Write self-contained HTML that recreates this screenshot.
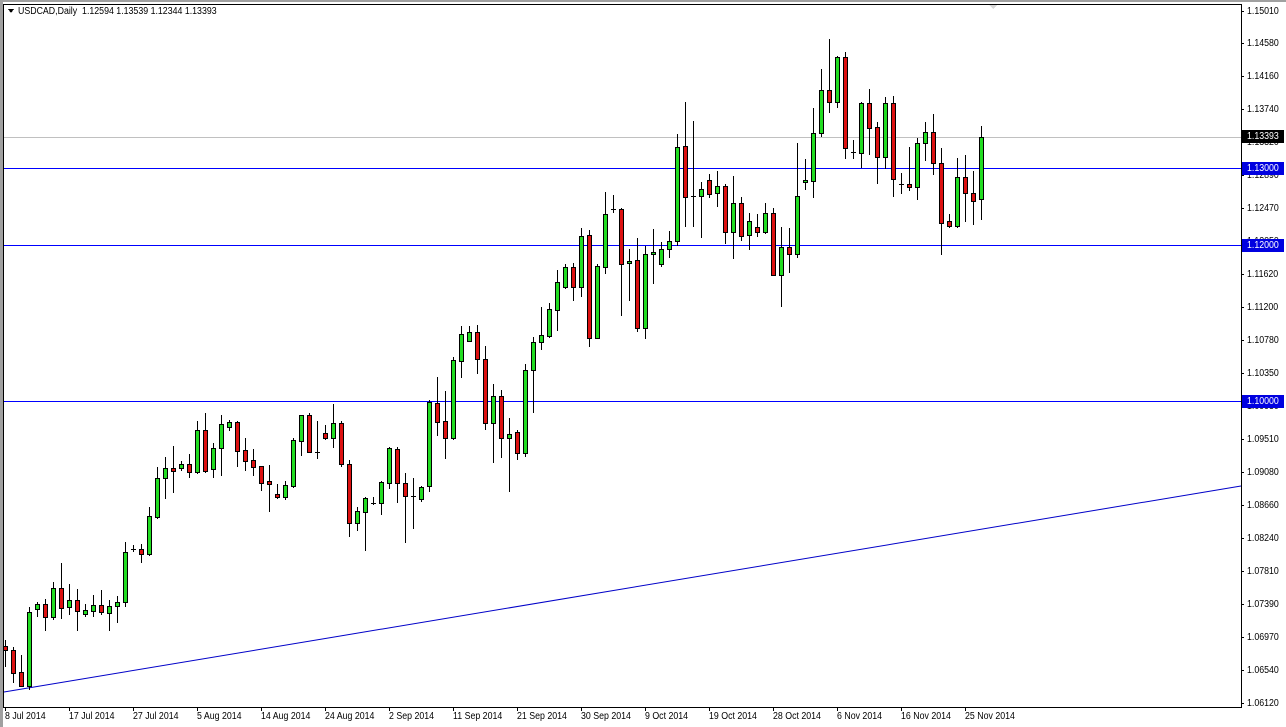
<!DOCTYPE html>
<html><head><meta charset="utf-8"><style>
html,body{margin:0;padding:0;background:#fff;width:1286px;height:727px;overflow:hidden;position:relative;font-family:"Liberation Sans",sans-serif;}
.t{position:absolute;font-size:10px;color:#000;line-height:13px;white-space:nowrap;transform:scaleX(0.88);transform-origin:0 0}
.p{left:1247px}
.hl{position:absolute;left:1242px;width:42px;height:13px;}
.hlt{position:absolute;left:1247px;font-size:10px;line-height:13px;color:#fff;white-space:nowrap;transform:scaleX(0.88);transform-origin:0 0}
</style></head><body>
<svg width="1286" height="727" style="position:absolute;left:0;top:0" shape-rendering="crispEdges">
<rect x="0" y="0" width="1286" height="2" fill="#a0a0a0"/>
<rect x="0" y="0" width="3" height="727" fill="#a0a0a0"/>
<line x1="3" y1="4.5" x2="1241" y2="4.5" stroke="#000"/>
<line x1="3.5" y1="4" x2="3.5" y2="707" stroke="#000"/>
<line x1="1241.5" y1="4" x2="1241.5" y2="707" stroke="#000"/>
<line x1="3" y1="707.5" x2="1242" y2="707.5" stroke="#000"/>
<rect x="4" y="137" width="1237" height="1" fill="#c0c0c0"/>
<rect x="4" y="168" width="1237" height="1" fill="#0000ff"/>
<rect x="4" y="245" width="1237" height="1" fill="#0000ff"/>
<rect x="4" y="401" width="1237" height="1" fill="#0000ff"/>
<line x1="4" y1="692" x2="1241" y2="486" stroke="#0000c8" shape-rendering="auto"/>
<g stroke="#000" stroke-width="1">
<path d="M1241 11.5h3M1241 43.5h3M1241 76.5h3M1241 109.5h3M1241 142.5h3M1241 175.5h3M1241 208.5h3M1241 241.5h3M1241 274.5h3M1241 307.5h3M1241 340.5h3M1241 373.5h3M1241 406.5h3M1241 439.5h3M1241 472.5h3M1241 505.5h3M1241 538.5h3M1241 571.5h3M1241 604.5h3M1241 637.5h3M1241 670.5h3M1241 703.5h3"/>
<path d="M5.5 707v4M69.5 707v4M133.5 707v4M197.5 707v4M261.5 707v4M325.5 707v4M389.5 707v4M453.5 707v4M517.5 707v4M581.5 707v4M645.5 707v4M709.5 707v4M773.5 707v4M837.5 707v4M901.5 707v4M965.5 707v4"/>
<path d="M5.5 640V667M13.5 647V683M21.5 655V686M29.5 607V690M37.5 602V617M45.5 599V631M53.5 582V620M61.5 563V619M69.5 584V615M77.5 589V631M85.5 604V617M93.5 595V617M101.5 590V615M109.5 600V631M117.5 596V623M125.5 542V607M133.5 545V552M141.5 544V563M149.5 507V556M157.5 467V519M165.5 457V499M173.5 446V493M181.5 461V471M189.5 454V478M197.5 421V474M205.5 413V473M213.5 443V478M221.5 415V476M229.5 420V431M237.5 421V467M245.5 438V471M253.5 449V476M261.5 466V491M269.5 465V512M277.5 484V499M285.5 481V500M293.5 438V488M301.5 415V456M309.5 413V453M317.5 421V459M325.5 425V440M333.5 404V448M341.5 421V467M349.5 460V537M357.5 507V531M365.5 497V551M373.5 497V505M381.5 481V515M389.5 447V489M397.5 447V503M405.5 473V543M413.5 478V529M421.5 486V502M429.5 400V492M437.5 377V436M445.5 391V459M453.5 357V440M461.5 326V378M469.5 326V342M477.5 325V374M485.5 346V430M493.5 384V463M501.5 390V458M509.5 418V492M517.5 430V460M525.5 364V457M533.5 337V413M541.5 307V350M549.5 303V338M557.5 270V331M565.5 264V289M573.5 263V301M581.5 228V297M589.5 230V347M597.5 264V339M605.5 192V274M613.5 195V213M621.5 208V316M629.5 249V301M637.5 238V332M645.5 246V339M653.5 229V284M661.5 242V267M669.5 231V258M677.5 134V246M685.5 102V227M693.5 121V227M701.5 182V238M709.5 174V198M717.5 171V207M725.5 184V244M733.5 176V259M741.5 197V241M749.5 213V250M757.5 214V237M765.5 203V234M773.5 208V276M781.5 227V307M789.5 228V273M797.5 143V258M805.5 159V190M813.5 108V198M821.5 69V137M829.5 39V113M837.5 56V108M845.5 52V159M853.5 140V159M861.5 102V168M869.5 89V155M877.5 122V184M885.5 97V169M893.5 96V197M901.5 173V194M909.5 147V191M917.5 138V200M925.5 122V161M933.5 114V175M941.5 148V255M949.5 214V228M957.5 158V228M965.5 155V222M973.5 171V225M981.5 126V220"/>
<path d="M131 549.5h5M315 452.5h5M371 503.5h5M411 496.5h5M611 209.5h5M691 196.5h5M851 152.5h5M899 184.5h5"/>
</g>
<g fill="#22dd22" stroke="#000" stroke-width="1">
<rect x="27.5" y="612.5" width="4" height="74"/><rect x="35.5" y="604.5" width="4" height="5"/><rect x="51.5" y="588.5" width="4" height="29"/><rect x="67.5" y="600.5" width="4" height="7"/><rect x="83.5" y="610.5" width="4" height="4"/><rect x="91.5" y="605.5" width="4" height="6"/><rect x="107.5" y="606.5" width="4" height="7"/><rect x="115.5" y="602.5" width="4" height="4"/><rect x="123.5" y="552.5" width="4" height="50"/><rect x="147.5" y="516.5" width="4" height="38"/><rect x="155.5" y="478.5" width="4" height="39"/><rect x="163.5" y="468.5" width="4" height="10"/><rect x="179.5" y="464.5" width="4" height="4"/><rect x="195.5" y="430.5" width="4" height="42"/><rect x="211.5" y="448.5" width="4" height="21"/><rect x="219.5" y="424.5" width="4" height="24"/><rect x="227.5" y="422.5" width="4" height="5"/><rect x="283.5" y="485.5" width="4" height="12"/><rect x="291.5" y="440.5" width="4" height="46"/><rect x="299.5" y="415.5" width="4" height="26"/><rect x="331.5" y="423.5" width="4" height="15"/><rect x="355.5" y="511.5" width="4" height="12"/><rect x="363.5" y="498.5" width="4" height="14"/><rect x="379.5" y="482.5" width="4" height="21"/><rect x="387.5" y="448.5" width="4" height="35"/><rect x="419.5" y="487.5" width="4" height="12"/><rect x="427.5" y="402.5" width="4" height="84"/><rect x="451.5" y="360.5" width="4" height="78"/><rect x="459.5" y="334.5" width="4" height="27"/><rect x="467.5" y="332.5" width="4" height="9"/><rect x="491.5" y="396.5" width="4" height="27"/><rect x="507.5" y="434.5" width="4" height="4"/><rect x="523.5" y="370.5" width="4" height="83"/><rect x="531.5" y="342.5" width="4" height="28"/><rect x="539.5" y="335.5" width="4" height="7"/><rect x="547.5" y="309.5" width="4" height="27"/><rect x="555.5" y="282.5" width="4" height="28"/><rect x="563.5" y="267.5" width="4" height="20"/><rect x="579.5" y="236.5" width="4" height="51"/><rect x="595.5" y="266.5" width="4" height="72"/><rect x="603.5" y="214.5" width="4" height="53"/><rect x="627.5" y="261.5" width="4" height="2"/><rect x="643.5" y="254.5" width="4" height="74"/><rect x="651.5" y="252.5" width="4" height="2"/><rect x="659.5" y="249.5" width="4" height="15"/><rect x="667.5" y="241.5" width="4" height="8"/><rect x="675.5" y="147.5" width="4" height="94"/><rect x="699.5" y="189.5" width="4" height="7"/><rect x="715.5" y="186.5" width="4" height="7"/><rect x="731.5" y="203.5" width="4" height="29"/><rect x="747.5" y="221.5" width="4" height="14"/><rect x="763.5" y="213.5" width="4" height="19"/><rect x="779.5" y="247.5" width="4" height="28"/><rect x="795.5" y="196.5" width="4" height="58"/><rect x="803.5" y="180.5" width="4" height="2"/><rect x="811.5" y="133.5" width="4" height="48"/><rect x="819.5" y="90.5" width="4" height="43"/><rect x="835.5" y="57.5" width="4" height="45"/><rect x="859.5" y="103.5" width="4" height="50"/><rect x="883.5" y="103.5" width="4" height="54"/><rect x="915.5" y="143.5" width="4" height="44"/><rect x="923.5" y="132.5" width="4" height="11"/><rect x="955.5" y="177.5" width="4" height="49"/><rect x="979.5" y="137.5" width="4" height="62"/>
</g>
<g fill="#dd1111" stroke="#000" stroke-width="1">
<rect x="3.5" y="646.5" width="4" height="4"/><rect x="11.5" y="650.5" width="4" height="23"/><rect x="19.5" y="672.5" width="4" height="14"/><rect x="43.5" y="604.5" width="4" height="13"/><rect x="59.5" y="588.5" width="4" height="20"/><rect x="75.5" y="600.5" width="4" height="11"/><rect x="99.5" y="605.5" width="4" height="7"/><rect x="139.5" y="549.5" width="4" height="5"/><rect x="171.5" y="468.5" width="4" height="3"/><rect x="187.5" y="464.5" width="4" height="8"/><rect x="203.5" y="430.5" width="4" height="41"/><rect x="235.5" y="422.5" width="4" height="29"/><rect x="243.5" y="450.5" width="4" height="11"/><rect x="251.5" y="460.5" width="4" height="7"/><rect x="259.5" y="466.5" width="4" height="17"/><rect x="267.5" y="481.5" width="4" height="3"/><rect x="275.5" y="494.5" width="4" height="3"/><rect x="307.5" y="415.5" width="4" height="37"/><rect x="323.5" y="433.5" width="4" height="5"/><rect x="339.5" y="423.5" width="4" height="41"/><rect x="347.5" y="464.5" width="4" height="59"/><rect x="395.5" y="449.5" width="4" height="34"/><rect x="403.5" y="483.5" width="4" height="13"/><rect x="435.5" y="403.5" width="4" height="19"/><rect x="443.5" y="421.5" width="4" height="17"/><rect x="475.5" y="332.5" width="4" height="27"/><rect x="483.5" y="359.5" width="4" height="64"/><rect x="499.5" y="396.5" width="4" height="42"/><rect x="515.5" y="432.5" width="4" height="21"/><rect x="571.5" y="267.5" width="4" height="20"/><rect x="587.5" y="235.5" width="4" height="103"/><rect x="619.5" y="209.5" width="4" height="55"/><rect x="635.5" y="260.5" width="4" height="68"/><rect x="683.5" y="146.5" width="4" height="51"/><rect x="707.5" y="180.5" width="4" height="14"/><rect x="723.5" y="186.5" width="4" height="46"/><rect x="739.5" y="203.5" width="4" height="33"/><rect x="755.5" y="227.5" width="4" height="5"/><rect x="771.5" y="213.5" width="4" height="62"/><rect x="787.5" y="247.5" width="4" height="7"/><rect x="827.5" y="90.5" width="4" height="12"/><rect x="843.5" y="57.5" width="4" height="91"/><rect x="867.5" y="103.5" width="4" height="25"/><rect x="875.5" y="127.5" width="4" height="30"/><rect x="891.5" y="103.5" width="4" height="76"/><rect x="907.5" y="184.5" width="4" height="3"/><rect x="931.5" y="132.5" width="4" height="31"/><rect x="939.5" y="163.5" width="4" height="60"/><rect x="947.5" y="221.5" width="4" height="5"/><rect x="963.5" y="177.5" width="4" height="16"/><rect x="971.5" y="193.5" width="4" height="8"/>
</g>
<path d="M8 9l3 4l3-4z" fill="#000"/>
<path d="M989 5h8l-4 4z" fill="#d8d8d8"/>
</svg>
<div class="t" style="left:18px;top:5px">USDCAD,Daily&nbsp; 1.12594 1.13539 1.12344 1.13393</div>
<div class="t p" style="top:5px">1.15010</div>
<div class="t p" style="top:37px">1.14580</div>
<div class="t p" style="top:70px">1.14160</div>
<div class="t p" style="top:103px">1.13740</div>
<div class="t p" style="top:136px">1.13320</div>
<div class="t p" style="top:169px">1.12890</div>
<div class="t p" style="top:202px">1.12470</div>
<div class="t p" style="top:235px">1.12050</div>
<div class="t p" style="top:268px">1.11620</div>
<div class="t p" style="top:301px">1.11200</div>
<div class="t p" style="top:334px">1.10780</div>
<div class="t p" style="top:367px">1.10350</div>
<div class="t p" style="top:400px">1.09930</div>
<div class="t p" style="top:433px">1.09510</div>
<div class="t p" style="top:466px">1.09080</div>
<div class="t p" style="top:499px">1.08660</div>
<div class="t p" style="top:532px">1.08240</div>
<div class="t p" style="top:565px">1.07810</div>
<div class="t p" style="top:598px">1.07390</div>
<div class="t p" style="top:631px">1.06970</div>
<div class="t p" style="top:664px">1.06540</div>
<div class="t p" style="top:697px">1.06120</div>
<div class="hl" style="top:130px;background:#000"></div><div class="hlt" style="top:130px">1.13393</div>
<div class="hl" style="top:162px;background:#0000e0"></div><div class="hlt" style="top:162px">1.13000</div>
<div class="hl" style="top:239px;background:#0000e0"></div><div class="hlt" style="top:239px">1.12000</div>
<div class="hl" style="top:395px;background:#0000e0"></div><div class="hlt" style="top:395px">1.10000</div>
<div class="t" style="left:5px;top:710px">8 Jul 2014</div>
<div class="t" style="left:69px;top:710px">17 Jul 2014</div>
<div class="t" style="left:133px;top:710px">27 Jul 2014</div>
<div class="t" style="left:197px;top:710px">5 Aug 2014</div>
<div class="t" style="left:261px;top:710px">14 Aug 2014</div>
<div class="t" style="left:325px;top:710px">24 Aug 2014</div>
<div class="t" style="left:389px;top:710px">2 Sep 2014</div>
<div class="t" style="left:453px;top:710px">11 Sep 2014</div>
<div class="t" style="left:517px;top:710px">21 Sep 2014</div>
<div class="t" style="left:581px;top:710px">30 Sep 2014</div>
<div class="t" style="left:645px;top:710px">9 Oct 2014</div>
<div class="t" style="left:709px;top:710px">19 Oct 2014</div>
<div class="t" style="left:773px;top:710px">28 Oct 2014</div>
<div class="t" style="left:837px;top:710px">6 Nov 2014</div>
<div class="t" style="left:901px;top:710px">16 Nov 2014</div>
<div class="t" style="left:965px;top:710px">25 Nov 2014</div>
</body></html>
